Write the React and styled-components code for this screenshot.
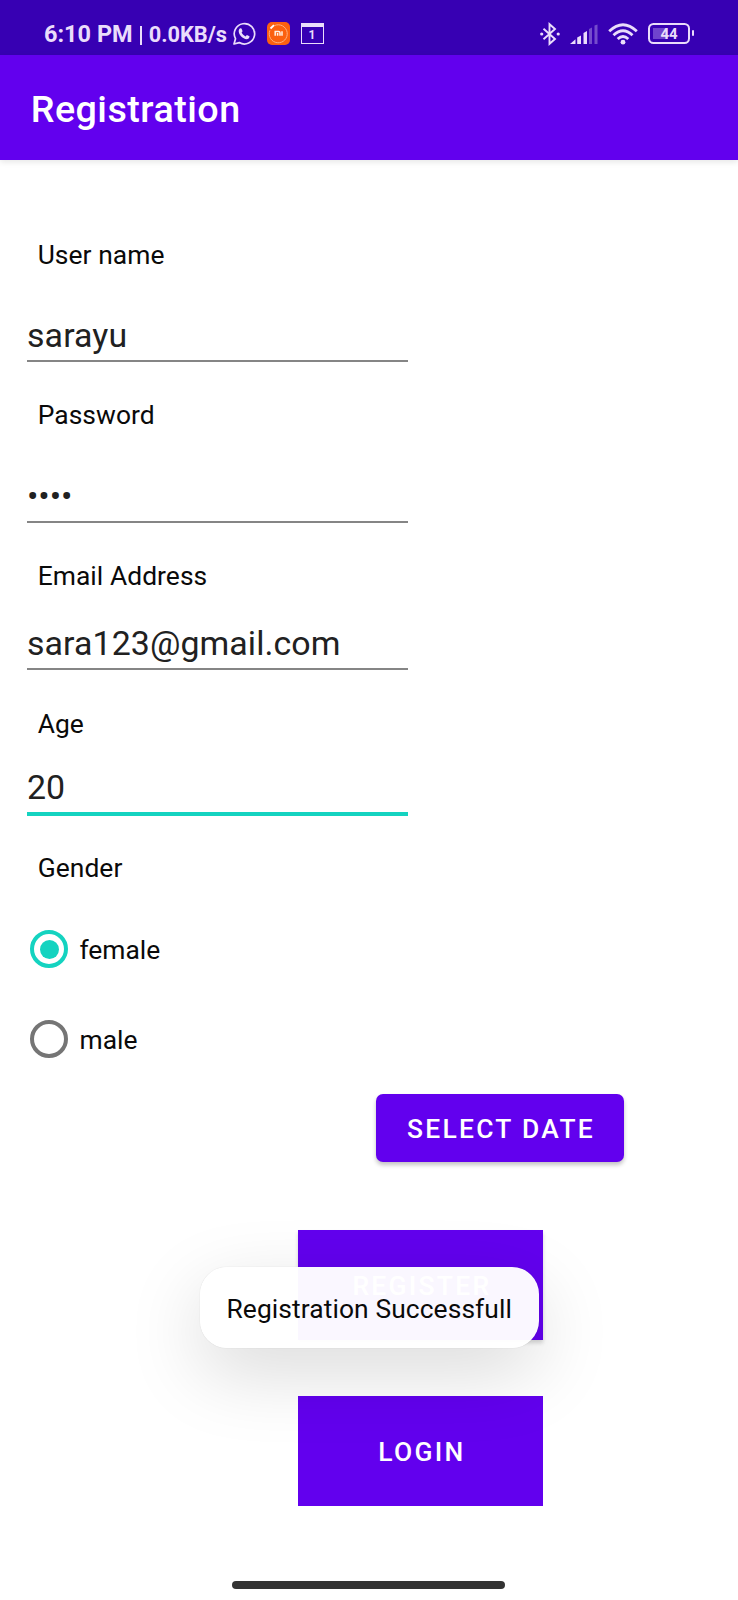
import React, { useState } from 'react';
import styled, { createGlobalStyle, css } from 'styled-components';

const GlobalStyle = createGlobalStyle`
  * { box-sizing: border-box; }
  body { margin: 0; background: #fff; font-family: Roboto, "Liberation Sans", sans-serif; }
`;

const Screen = styled.div`
  position: relative;
  display: flex;
  flex-direction: column;
  width: 738px;
  height: 1600px;
  background: #fff;
  overflow: hidden;
`;

const StatusBar = styled.header`
  display: flex;
  align-items: center;
  justify-content: space-between;
  height: 54.5px;
  padding: 13px 48px 0 44px;
  background: #3700b3;
  color: #eadcfb;
`;

const StatusGroup = styled.div`
  display: flex;
  align-items: center;
  gap: ${(p) => p.$gap || 0}px;
`;

const Clock = styled.span`
  font-size: 23.5px;
  font-weight: 700;
  line-height: 28px;
  padding-top: 1px;
  white-space: pre;
`;

const NetSpeed = styled.span`
  margin: 0 5px 0 7px;
  font-size: 21.8px;
  font-weight: 700;
  line-height: 28px;
  padding-top: 2px;
  white-space: pre;
`;

const Divider = styled.span`
  width: 2px;
  height: 19px;
  margin: 3px 0 0 7px;
  background: currentColor;
`;

const AppBar = styled.div`
  display: flex;
  align-items: center;
  flex: none;
  height: 105.5px;
  padding: 4px 30.7px 0;
  background: #6200ee;
  box-shadow: 0 2px 6px rgba(0, 0, 0, 0.1);
`;

const Title = styled.h1`
  margin: 0;
  color: #fff;
  font-size: 37.7px;
  font-weight: 500;
  line-height: 44px;
  letter-spacing: 0.47px;
`;

const Form = styled.main`
  display: flex;
  flex-direction: column;
  padding: 80px 27px 0;
`;

const Field = styled.div`
  display: flex;
  flex-direction: column;
  width: 381px;
  height: ${(p) => p.$height}px;
  margin-bottom: ${(p) => p.$gap}px;
`;

const Label = styled.div`
  flex: none;
  height: 30px;
  padding-left: 10.7px;
  color: #0a0a0a;
  font-size: 26.4px;
  line-height: 30px;
  letter-spacing: 0.06px;
`;

const Value = styled.div`
  display: flex;
  flex: 1;
  align-items: flex-end;
  padding-bottom: ${(p) => (p.$focused ? 4.5 : 4)}px;
  border-bottom: ${(p) => (p.$focused ? '4px solid #14d3c0' : '2px solid #858585')};
  color: #212121;
  font-size: 33.9px;
  line-height: 40px;
  letter-spacing: ${(p) => p.$spacing || 0}px;
`;

const Options = styled.div`
  display: flex;
  flex-direction: column;
  gap: 52px;
  padding: 47px 0 0 3px;
`;

const Option = styled.div`
  display: flex;
  align-items: center;
  gap: 11.5px;
  height: 38px;
  color: #0a0a0a;
  font-size: 26.4px;
  line-height: 30px;
  cursor: pointer;

  span:last-child { padding-top: 1px; }
`;

const Radio = styled.span`
  display: grid;
  place-items: center;
  width: 38px;
  height: 38px;
  border: 4px solid ${(p) => (p.$on ? '#14d3c0' : '#757575')};
  border-radius: 50%;

  ${(p) => p.$on && css`
    &::after {
      content: '';
      width: 19px;
      height: 19px;
      border-radius: 50%;
      background: #14d3c0;
    }
  `}
`;

const Button = styled.button`
  display: flex;
  align-items: center;
  justify-content: center;
  flex: none;
  border: 0;
  background: #6200ee;
  color: #fff;
  font: 500 26.4px/30px Roboto, "Liberation Sans", sans-serif;
  letter-spacing: 2.3px;
  text-transform: uppercase;
`;

const DateButton = styled(Button)`
  width: 248px;
  height: 68px;
  margin: 36px 0 0 349px;
  padding: 2px 0 0 2px;
  border-radius: 7px;
  box-shadow: 0 3px 4px rgba(0, 0, 0, 0.24);
`;

const ActionButton = styled(Button)`
  width: 245px;
  height: 109.5px;
  padding: 2px 0 0 2px;
  box-shadow: ${(p) => (p.$raised ? '0 3px 4px rgba(0, 0, 0, 0.16)' : 'none')};
`;

const Actions = styled.div`
  display: flex;
  flex-direction: column;
  gap: 56.5px;
  padding: 68px 0 0 271.4px;
`;

const Toast = styled.div`
  position: absolute;
  left: 200px;
  top: 1267px;
  display: flex;
  align-items: center;
  justify-content: center;
  width: 338.5px;
  height: 80.5px;
  padding-top: 3px;
  border-radius: 27px;
  background: rgba(255, 255, 255, 0.97);
  box-shadow: 0 0 1px rgba(0, 0, 0, 0.22), 0 24px 76px rgba(0, 0, 0, 0.15);
  color: #0a0a0a;
  font-size: 26.4px;
  line-height: 30px;
  letter-spacing: 0.09px;
  white-space: nowrap;
`;

const HomePill = styled.div`
  position: absolute;
  left: 232px;
  top: 1581px;
  width: 273px;
  height: 7.5px;
  border-radius: 4px;
  background: #333;
`;

const ChatIcon = () => (
  <svg width="24" height="24" viewBox="0 0 24 24" fill="none">
    <path d="M2 22 3.5 16.7A10.2 10.2 0 1 1 7.3 20.6Z" stroke="currentColor" strokeWidth="1.7" strokeLinejoin="round" />
    <path d="M8.1 6.2 9.5 6.5 10.6 9.2 9.6 10.6C10.5 12.4 11.7 13.6 13.5 14.4L14.9 13 17.5 14.3C17.5 16.2 16.2 17.2 14.6 17.2 10.8 16.9 6.8 12.6 6.7 9.2 6.7 7.9 7.3 6.7 8.1 6.2Z" fill="currentColor" />
  </svg>
);

const MiBadge = styled.span`
  display: grid;
  place-items: center;
  width: 23px;
  height: 23px;
  margin-left: 10.5px;
  border-radius: 5px;
  background: #fb6010;
`;

const MiIcon = () => (
  <MiBadge>
    <svg width="23" height="23" viewBox="0 0 23 23" fill="none" stroke="#fff0e6">
      <path d="M7.5 3.6A9 9 0 1 1 2.9 8.4" stroke="#ffb07e" strokeWidth="1" />
      <path d="M3.5 6.5 7 3.2" stroke="#fff" strokeWidth="1.8" />
      <path d="M8.2 13.8V9.5h3.5q1.3 0 1.3 1.3v3M10.6 11v2.8M15 9.2v4.6" strokeWidth="1.5" />
    </svg>
  </MiBadge>
);

const CalendarBadge = styled.span`
  display: flex;
  align-items: center;
  justify-content: center;
  width: 23px;
  height: 21px;
  margin-left: 11px;
  border: 1.6px solid currentColor;
  border-top-width: 4px;
  font-size: 12px;
  font-weight: 700;
  line-height: 14px;
`;

const BluetoothIcon = () => (
  <svg width="20" height="24" viewBox="0 0 20 24" fill="none" stroke="currentColor" strokeWidth="1.9">
    <path d="M3.5 6.7 15 17 9.5 21.8V2.2L15 7 3.5 17.3" />
    <circle cx="1.7" cy="12" r="1.6" fill="currentColor" stroke="none" />
    <circle cx="18.2" cy="12" r="1.6" fill="currentColor" stroke="none" />
  </svg>
);

const SignalIcon = () => (
  <svg width="28" height="20" viewBox="0 0 28 20" fill="currentColor">
    <path d="M0 20 5.5 15.2V20Z" />
    <path d="M7.2 20V13.6L11 11.5V20Z" />
    <path d="M13.5 20V9L17 7V20Z" />
    <path d="M19 20V5L22 3.5V20ZM24.5 20V1.5L27.5.5V20Z" opacity=".35" />
  </svg>
);

const WifiIcon = () => (
  <svg width="30" height="22" viewBox="0 0 30 22" fill="none" stroke="currentColor" strokeWidth="2.8">
    <path d="M1.2 8.2Q15-4.8 28.8 8.2" />
    <path d="M5.5 12.3Q15 3.2 24.5 12.3" />
    <path d="M9.7 16.1Q15 10.9 20.3 16.1" />
    <circle cx="15" cy="19.2" r="2.4" fill="currentColor" stroke="none" />
  </svg>
);

const Battery = styled.span`
  position: relative;
  display: flex;
  align-items: center;
  justify-content: center;
  width: 42px;
  height: 21px;
  padding-top: 1px;
  border: 2px solid currentColor;
  border-radius: 5.5px;
  background: linear-gradient(#7043cd, #7043cd) 3px 3px / 15px 11px no-repeat;
  font-size: 15px;
  font-weight: 700;
  line-height: 16px;

  &::after {
    content: '';
    position: absolute;
    right: -5.5px;
    top: 5px;
    width: 2px;
    height: 6px;
    border-radius: 1px;
    background: currentColor;
  }
`;

const fields = [
  { label: 'User name', value: 'sarayu', height: 122, gap: 38, spacing: 0.1 },
  { label: 'Password', value: '••••', height: 122.5, gap: 38, spacing: -0.1 },
  { label: 'Email Address', value: 'sara123@gmail.com', height: 109.5, gap: 39, spacing: 0.08 },
  { label: 'Age', value: '20', height: 107, gap: 37, spacing: 0, focused: true },
];

export default function App() {
  const [gender, setGender] = useState('female');

  return (
    <>
      <GlobalStyle />
      <Screen>
        <StatusBar>
          <StatusGroup>
            <Clock>6:10 PM</Clock>
            <Divider />
            <NetSpeed>0.0KB/s</NetSpeed>
            <ChatIcon />
            <MiIcon />
            <CalendarBadge>1</CalendarBadge>
          </StatusGroup>
          <StatusGroup $gap={10}>
            <BluetoothIcon />
            <SignalIcon />
            <WifiIcon />
            <Battery>44</Battery>
          </StatusGroup>
        </StatusBar>
        <AppBar>
          <Title>Registration</Title>
        </AppBar>
        <Form>
          {fields.map((f) => (
            <Field key={f.label} $height={f.height} $gap={f.gap}>
              <Label>{f.label}</Label>
              <Value $focused={f.focused} $spacing={f.spacing}>{f.value}</Value>
            </Field>
          ))}
          <Label>Gender</Label>
          <Options role="radiogroup">
            {['female', 'male'].map((g) => (
              <Option key={g} role="radio" aria-checked={gender === g} onClick={() => setGender(g)}>
                <Radio $on={gender === g} />
                <span>{g}</span>
              </Option>
            ))}
          </Options>
          <DateButton>Select date</DateButton>
          <Actions>
            <ActionButton $raised>Register</ActionButton>
            <ActionButton>Login</ActionButton>
          </Actions>
        </Form>
        <Toast role="status">Registration Successfull</Toast>
        <HomePill />
      </Screen>
    </>
  );
}
